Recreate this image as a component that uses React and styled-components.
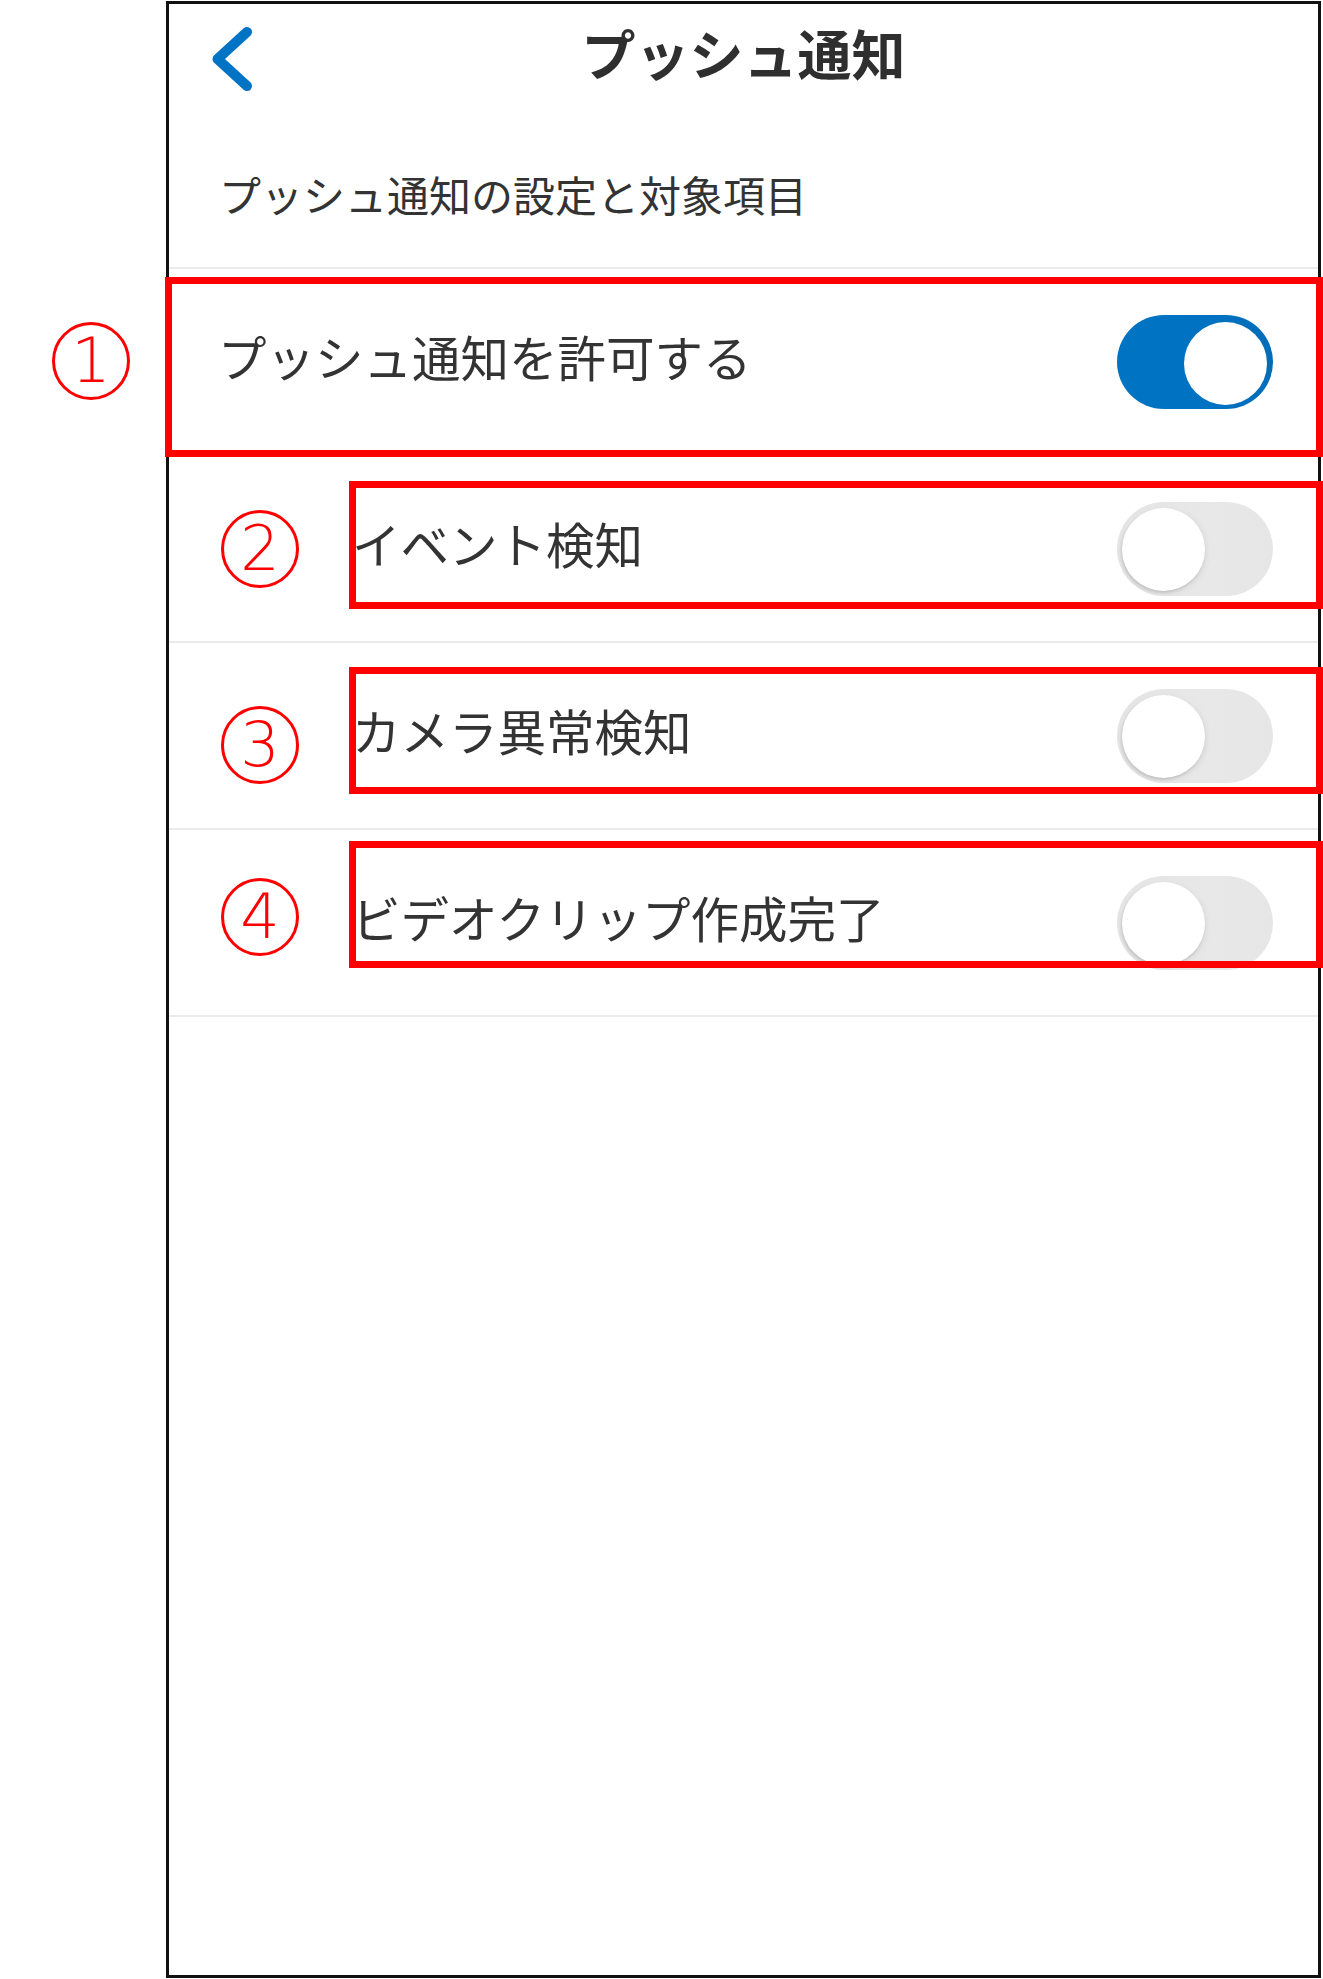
import React from "react";
import styled, { createGlobalStyle, css } from "styled-components";

const GlobalStyle = createGlobalStyle`
  html, body {
    margin: 0;
    padding: 0;
    background: #ffffff;
  }
  body {
    font-family: "Noto Sans CJK JP", "Noto Sans", sans-serif;
    color: #333333;
  }
  * { box-sizing: border-box; }
`;

const Page = styled.div`
  width: 1323px;
  height: 1979px;
  padding: 1px 0 0 166px;
`;

const Phone = styled.div`
  width: 1155px;
  height: 1977px;
  border: 3px solid #111111;
  background: #ffffff;
  display: flex;
  flex-direction: column;
`;

const TitleBar = styled.header`
  height: 98px;
  display: grid;
  grid-template-columns: 1fr auto 1fr;
  align-items: center;
`;

const BackButton = styled.button`
  justify-self: start;
  margin: 11px 0 0 43px;
  padding: 0;
  border: none;
  background: none;
  width: 41px;
  height: 66px;
  display: flex;
`;

const Title = styled.h1`
  margin: 0;
  font-size: 54px;
  font-weight: 700;
  line-height: 1;
  color: #2f2f2f;
`;

const Subtitle = styled.div`
  height: 167px;
  padding: 18px 0 0 50px;
  display: flex;
  align-items: center;
  font-size: 42px;
  line-height: 1;
  color: #333333;
  border-bottom: 2px solid #ebebeb;
`;

const Row = styled.div`
  position: relative;
  height: 187px;
  padding: 0 45px 0 49px;
  display: flex;
  align-items: center;
  border-bottom: 2px solid #ebebeb;
`;

const Label = styled.span`
  flex: 1;
  padding-bottom: 11px;
  font-size: 48.5px;
  line-height: 1;
  color: #333333;
  white-space: nowrap;
`;

const Marker = styled.span`
  flex: none;
  width: 78px;
  height: 78px;
  margin: 0 53px 0 3px;
  border: 3px solid #ff0000;
  border-radius: 50%;
  display: flex;
  align-items: center;
  justify-content: center;
  color: #ff0000;
  font-family: "DejaVu Sans", "Liberation Sans", sans-serif;
  font-weight: 200;
  font-size: 62px;
  line-height: 1;
  transform: translateY(${(p) => p.$shift || 0}px);
`;

const OuterMarker = styled(Marker)`
  position: absolute;
  left: -117px;
  top: 53px;
  margin: 0;
`;

const Annotation = styled.div`
  position: absolute;
  z-index: 2;
  pointer-events: none;
  border: 7px solid #ff0000;
  top: ${(p) => p.$top}px;
  height: ${(p) => p.$height}px;
  left: ${(p) => p.$left}px;
  right: -5px;
`;

const Track = styled.span`
  flex: none;
  position: relative;
  width: 156px;
  height: 94px;
  border-radius: 47px;
  ${(p) =>
    p.$on
      ? css`
          background: linear-gradient(90deg, #0073c3 0%, #0072c2 60%, #006cb8 100%);
        `
      : css`
          background: linear-gradient(90deg, #e4e4e4 0%, #e8e8e8 60%, #e6e6e6 100%);
        `}
`;

const Knob = styled.span`
  position: absolute;
  top: ${(p) => (p.$on ? 7 : 6)}px;
  width: 83px;
  height: 83px;
  border-radius: 50%;
  background: #ffffff;
  ${(p) =>
    p.$on
      ? css`
          right: 6px;
        `
      : css`
          left: 5px;
          box-shadow: -1px 2px 3px rgba(0, 0, 0, 0.12), 2px 2px 6px rgba(0, 0, 0, 0.06);
        `}
`;

function Toggle({ on }) {
  return (
    <Track $on={on}>
      <Knob $on={on} />
    </Track>
  );
}

function BackChevron() {
  return (
    <svg width="41" height="66" viewBox="0 0 41 66">
      <path
        d="M35 6 L5.5 33 L35 60"
        fill="none"
        stroke="#0073c4"
        strokeWidth="10"
        strokeLinecap="round"
        strokeLinejoin="round"
      />
    </svg>
  );
}

const items = [
  { num: "2", label: "イベント検知", shift: 0, boxTop: 25, boxHeight: 128 },
  { num: "3", label: "カメラ異常検知", shift: 9, boxTop: 24, boxHeight: 127 },
  { num: "4", label: "ビデオクリップ作成完了", shift: -6, boxTop: 11, boxHeight: 127 },
];

export default function App() {
  return (
    <>
      <GlobalStyle />
      <Page>
        <Phone>
          <TitleBar>
            <BackButton aria-label="戻る">
              <BackChevron />
            </BackButton>
            <Title>プッシュ通知</Title>
            <span />
          </TitleBar>
          <Subtitle>プッシュ通知の設定と対象項目</Subtitle>
          <Row>
            <OuterMarker>1</OuterMarker>
            <Label>プッシュ通知を許可する</Label>
            <Toggle on />
            <Annotation $top={8} $height={180} $left={-4} />
          </Row>
          {items.map((it) => (
            <Row key={it.num}>
              <Marker $shift={it.shift}>{it.num}</Marker>
              <Label>{it.label}</Label>
              <Toggle on={false} />
              <Annotation $top={it.boxTop} $height={it.boxHeight} $left={180} />
            </Row>
          ))}
        </Phone>
      </Page>
    </>
  );
}
